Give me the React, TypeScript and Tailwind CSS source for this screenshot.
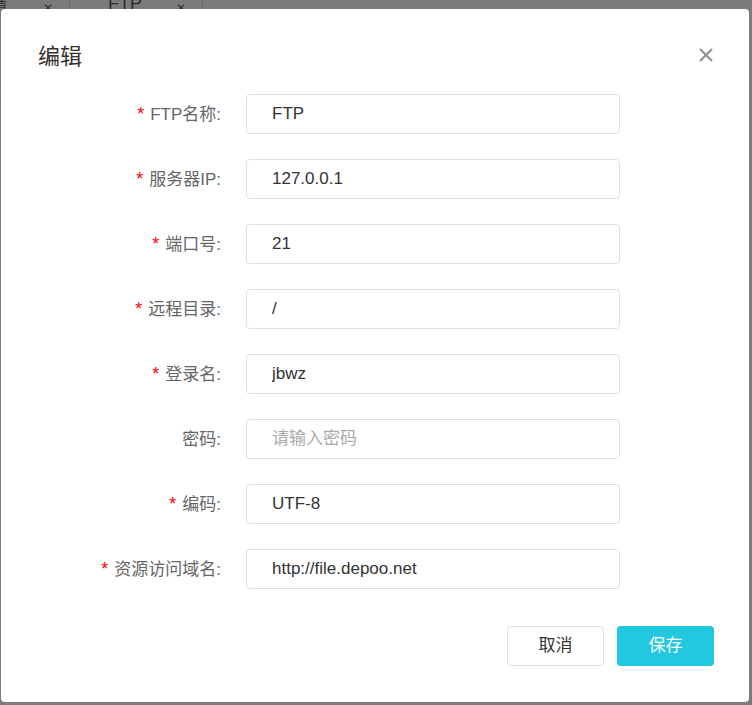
import { X } from 'lucide-react';

interface Field {
  label: string;
  required: boolean;
  value: string;
  placeholder?: string;
}

const fields: Field[] = [
  { label: 'FTP名称', required: true, value: 'FTP' },
  { label: '服务器IP', required: true, value: '127.0.0.1' },
  { label: '端口号', required: true, value: '21' },
  { label: '远程目录', required: true, value: '/' },
  { label: '登录名', required: true, value: 'jbwz' },
  { label: '密码', required: false, value: '', placeholder: '请输入密码' },
  { label: '编码', required: true, value: 'UTF-8' },
  { label: '资源访问域名', required: true, value: 'http://file.depoo.net' },
];

const font = 'font-["Liberation_Sans","Noto_Sans_CJK_SC",sans-serif]';

export default function App() {
  return (
    <div className={`relative w-[752px] h-[705px] overflow-hidden bg-[#7b7b7b] ${font}`}>
      {/* page behind the overlay: tab strip */}
      <div className="flex h-[9px] items-end overflow-hidden text-[#2b2b2b] text-[14px]">
        <div className="flex w-[70px] items-end justify-between border-r border-[#6a6a6a] pr-[16px] -mb-[8px]">
          <span className="-ml-[7px]">值</span>
          <span className="text-[12px]">✕</span>
        </div>
        <div className="flex w-[133px] items-end justify-between border-r border-[#6a6a6a] pl-[38px] pr-[16px] -mb-[8px]">
          <span className="text-[18px]">FTP</span>
          <span className="text-[12px]">✕</span>
        </div>
      </div>
      <div className="absolute left-0 top-[85px] w-[2px] h-[3px] bg-[#3f8f8a]" />
      <div className="absolute left-0 top-[101px] w-[2px] h-[3px] bg-[#3f8f8a]" />

      {/* dialog */}
      <div className="absolute left-[1px] top-[9px] w-[748px] h-[693px] rounded-[4px] bg-white">
        <div className="flex items-start justify-between pl-[37px] pr-[35px] pt-[33px]">
          <h2 className="text-[22px] leading-[30px] text-[#333]">编辑</h2>
          <button className="mt-[5px] text-[#8f8f8f]" aria-label="关闭">
            <X size={22} strokeWidth={2.1} className="-m-[3px]" />
          </button>
        </div>

        <form className="mt-[22px] flex flex-col gap-[25px]">
          {fields.map((f) => (
            <div key={f.label} className="flex items-center h-[40px]">
              <label className="w-[220px] pt-[1px] text-right text-[17px] text-[#666] whitespace-nowrap">
                {f.required && <span className="mr-[6px] text-[18px] text-[#f00]">*</span>}
                {f.label}:
              </label>
              <input
                readOnly
                value={f.value}
                placeholder={f.placeholder}
                className="ml-[25px] w-[374px] h-[40px] rounded-[4px] border border-[#e0e0e0] px-[25px] text-[17px] text-[#333] placeholder:text-[#aaa] outline-none"
              />
            </div>
          ))}
        </form>

        <div className="mt-[37px] flex justify-end gap-[13px] pr-[35px]">
          <button className="w-[97px] h-[40px] rounded-[4px] border border-[#e0e0e0] bg-white text-[17px] text-[#333]">
            取消
          </button>
          <button className="w-[97px] h-[40px] rounded-[4px] bg-[#22c7e0] text-[17px] text-white">
            保存
          </button>
        </div>
      </div>
    </div>
  );
}
